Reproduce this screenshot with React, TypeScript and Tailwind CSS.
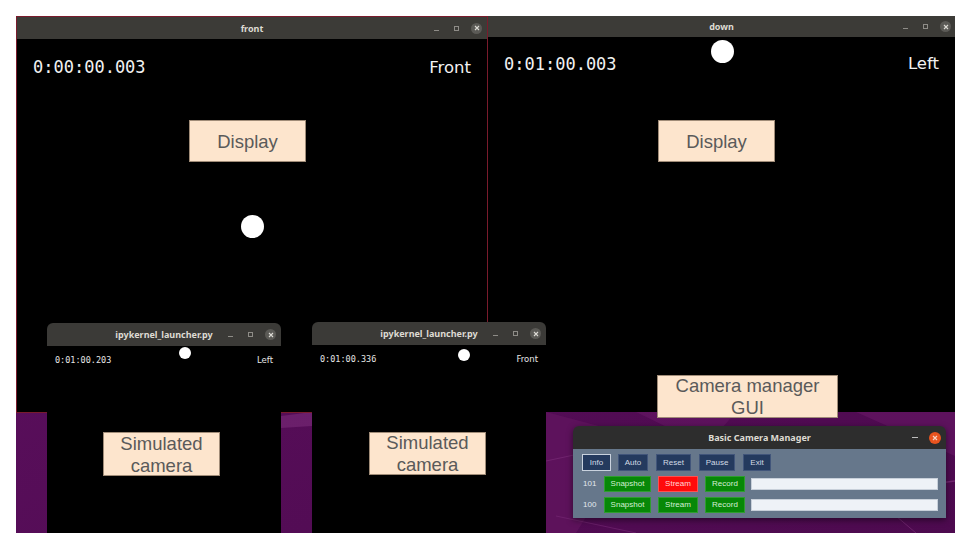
import React from "react";

function Controls({ pr, orange = false }: { pr: string; orange?: boolean }) {
  return (
    <div className={`flex items-center justify-end gap-[9px] ${pr}`}>
      {!orange && (
        <>
          <div className="w-[11px] h-[11px] flex items-end justify-center pb-[3px]">
            <div className="w-[5px] h-px bg-[#8e8c87]" />
          </div>
          <div className="w-[11px] h-[11px] flex items-center justify-center">
            <div className="w-[5px] h-[5px] border border-[#8e8c87]" />
          </div>
          <div className="w-[11px] h-[11px] rounded-full bg-[#5b5a56] flex items-center justify-center">
            <svg width="6" height="6" viewBox="0 0 6 6">
              <path d="M1 1L5 5M5 1L1 5" stroke="#dcdad4" strokeWidth="1.1" />
            </svg>
          </div>
        </>
      )}
      {orange && (
        <>
          <div className="w-[11px] h-[12px] flex items-center justify-center">
            <div className="w-[6px] h-px bg-[#bdbdbd]" />
          </div>
          <div className="w-[12px] h-[12px] rounded-full bg-[#e9541f] flex items-center justify-center">
            <svg width="6" height="6" viewBox="0 0 6 6">
              <path d="M1 1L5 5M5 1L1 5" stroke="#f6d2c4" strokeWidth="1.2" />
            </svg>
          </div>
        </>
      )}
    </div>
  );
}

function TitleBar({
  title,
  h,
  bg,
  pr,
  orange = false,
}: {
  title: string;
  h: string;
  bg: string;
  pr: string;
  orange?: boolean;
}) {
  return (
    <div className={`grid grid-cols-[1fr_auto_1fr] items-center shrink-0 ${h} ${bg}`}>
      <div />
      <div className="font-['Noto_Sans',sans-serif] font-bold text-[9px] leading-none text-[#dedbd3]">
        {title}
      </div>
      <Controls pr={pr} orange={orange} />
    </div>
  );
}

function Label({ className, children }: { className: string; children: React.ReactNode }) {
  return (
    <div
      className={`absolute bg-[#fde5cd] border border-[#a08c78] pt-[1px] flex flex-col items-center justify-center text-center text-[#5a5a5a] text-[18.5px] leading-[22px] font-['Liberation_Sans',Arial,sans-serif] ${className}`}
    >
      {children}
    </div>
  );
}

function Dot({ className }: { className: string }) {
  return <div className={`absolute rounded-full bg-white ${className}`} />;
}

const navyBtn =
  "h-[17px] bg-[#243a5e] border border-[#41557a] text-[#d3dae5] text-[8px] leading-none flex items-center justify-center font-['Liberation_Sans',Arial,sans-serif]";
const greenBtn =
  "h-[16px] bg-[#078807] border border-[#2f9e2f] text-[#d5eed5] text-[8px] leading-none flex items-center justify-center font-['Liberation_Sans',Arial,sans-serif]";
const redBtn =
  "h-[16px] bg-[#ff0b0b] border border-[#ff5050] text-[#ffd6d6] text-[8px] leading-none flex items-center justify-center font-['Liberation_Sans',Arial,sans-serif]";

function CamRow({ id, streamRed }: { id: string; streamRed: boolean }) {
  return (
    <div className="flex items-center h-[16px]">
      <div className="w-[21px] text-[#e3e8ef] text-[8px] leading-none font-['Liberation_Sans',Arial,sans-serif]">
        {id}
      </div>
      <div className={`${greenBtn} w-[47px]`}>Snapshot</div>
      <div className={`${streamRed ? redBtn : greenBtn} w-[40px] ml-[7px]`}>Stream</div>
      <div className={`${greenBtn} w-[40px] ml-[7px]`}>Record</div>
      <div className="w-[187px] h-[12px] ml-[6px] bg-[#eef2f7] border border-[#c8d0da]" />
    </div>
  );
}

export default function App() {
  return (
    <div className="w-[960px] h-[540px] bg-white p-4">
      <div className="relative w-[939px] h-[517px] overflow-hidden bg-[#570d58]">
        {/* wallpaper */}
        <svg className="absolute inset-0" width="939" height="517" viewBox="0 0 939 517">
          <defs>
            <linearGradient id="wp" x1="0" y1="0" x2="1" y2="1">
              <stop offset="0" stopColor="#5e1060" />
              <stop offset="1" stopColor="#4d0a4f" />
            </linearGradient>
          </defs>
          <rect width="939" height="517" fill="url(#wp)" />
          <polygon points="265,400 296,396 296,410 265,412" fill="#7a2c78" opacity="0.6" />
          <polygon points="530,396 620,420 560,517 530,517" fill="#63155f" opacity="0.7" />
          <polygon points="620,396 720,396 690,430" fill="#6a1a68" opacity="0.5" />
          <polygon points="840,396 939,440 939,396" fill="#671866" opacity="0.6" />
          <line x1="530" y1="445" x2="600" y2="430" stroke="#7e2f7c" strokeWidth="1" opacity="0.6" />
          <line x1="900" y1="470" x2="939" y2="465" stroke="#8a3a86" strokeWidth="1.5" opacity="0.6" />
          <line x1="880" y1="500" x2="900" y2="517" stroke="#8a3a86" strokeWidth="1" opacity="0.5" />
          <line x1="540" y1="500" x2="620" y2="517" stroke="#7e2f7c" strokeWidth="1" opacity="0.5" />
        </svg>

        {/* front window */}
        <div className="absolute left-0 top-0 w-[472px] h-[397px] border border-[#7a1b2c] bg-black flex flex-col">
          <TitleBar title="front" h="h-[22px]" bg="bg-[#3c3b37]" pr="pr-[5px]" />
          <div className="relative flex-1">
            <div className="flex items-center justify-between h-[57px] pl-[16px] pr-[16px]">
              <span className="font-['DejaVu_Sans_Mono',monospace] text-[17px] leading-none text-[#f2f2f2]">
                0:00:00.003
              </span>
              <span className="font-['DejaVu_Sans',sans-serif] text-[16.5px] leading-none text-[#f2f2f2] pt-[1px]">
                Front
              </span>
            </div>
            <Dot className="left-[224px] top-[176px] w-[23px] h-[23px]" />
          </div>
        </div>

        {/* down window */}
        <div className="absolute left-[472px] top-0 w-[467px] h-[396px] bg-black flex flex-col">
          <TitleBar title="down" h="h-[21px]" bg="bg-[#3c3b37]" pr="pr-[4px]" />
          <div className="relative flex-1">
            <div className="flex items-center justify-between h-[55px] pl-[16px] pr-[16px]">
              <span className="font-['DejaVu_Sans_Mono',monospace] text-[17px] leading-none text-[#f2f2f2]">
                0:01:00.003
              </span>
              <span className="font-['DejaVu_Sans',sans-serif] text-[16.5px] leading-none text-[#f2f2f2]">
                Left
              </span>
            </div>
            <Dot className="left-[223px] top-[3px] w-[23px] h-[23px]" />
          </div>
        </div>

        {/* small window 1 */}
        <div className="absolute left-[31px] top-[307px] w-[234px] h-[210px] rounded-t-[6px] overflow-hidden bg-black flex flex-col">
          <TitleBar title="ipykernel_launcher.py" h="h-[23px]" bg="bg-[#3b3a37]" pr="pr-[5px]" />
          <div className="relative flex-1">
            <div className="flex items-center justify-between h-[29px] pl-[8px] pr-[8px]">
              <span className="font-['DejaVu_Sans_Mono',monospace] text-[8.5px] leading-none text-[#e6e6e6]">
                0:01:00.203
              </span>
              <span className="font-['DejaVu_Sans',sans-serif] text-[8.5px] leading-none text-[#e6e6e6]">
                Left
              </span>
            </div>
            <Dot className="left-[132px] top-[1px] w-[12px] h-[12px]" />
          </div>
        </div>

        {/* small window 2 */}
        <div className="absolute left-[296px] top-[306px] w-[234px] h-[211px] rounded-t-[6px] overflow-hidden bg-black flex flex-col">
          <TitleBar title="ipykernel_launcher.py" h="h-[23px]" bg="bg-[#3b3a37]" pr="pr-[5px]" />
          <div className="relative flex-1">
            <div className="flex items-center justify-between h-[28px] pl-[8px] pr-[8px]">
              <span className="font-['DejaVu_Sans_Mono',monospace] text-[8.5px] leading-none text-[#e6e6e6]">
                0:01:00.336
              </span>
              <span className="font-['DejaVu_Sans',sans-serif] text-[8.5px] leading-none text-[#e6e6e6]">
                Front
              </span>
            </div>
            <Dot className="left-[146px] top-[4px] w-[12px] h-[12px]" />
          </div>
        </div>

        {/* camera manager */}
        <div className="absolute left-[557px] top-[410px] w-[373px] h-[92px] rounded-t-[6px] overflow-hidden flex flex-col shadow-[0_2px_6px_rgba(0,0,0,0.5)]">
          <TitleBar title="Basic Camera Manager" h="h-[23px]" bg="bg-[#2d2d2d]" pr="pr-[5px]" orange />
          <div className="flex-1 bg-[#66778b] pl-[9px] pt-[5px] flex flex-col gap-[5px]">
            <div className="flex items-center gap-[7px]">
              <div className={`${navyBtn} w-[29px] border-[#c9d2de]`}>Info</div>
              <div className={`${navyBtn} w-[30px]`}>Auto</div>
              <div className={`${navyBtn} w-[35px] ml-[1px]`}>Reset</div>
              <div className={`${navyBtn} w-[36px] ml-[1px]`}>Pause</div>
              <div className={`${navyBtn} w-[28px] ml-[1px]`}>Exit</div>
            </div>
            <div className="pl-[1px] flex flex-col gap-[5px]">
              <CamRow id="101" streamRed />
              <CamRow id="100" streamRed={false} />
            </div>
          </div>
        </div>

        {/* annotations */}
        <Label className="left-[173px] top-[104px] w-[117px] h-[42px]">Display</Label>
        <Label className="left-[642px] top-[104px] w-[117px] h-[42px]">Display</Label>
        <Label className="left-[87px] top-[416px] w-[117px] h-[44px]">
          <span>Simulated</span>
          <span>camera</span>
        </Label>
        <Label className="left-[353px] top-[416px] w-[117px] h-[43px]">
          <span>Simulated</span>
          <span>camera</span>
        </Label>
        <Label className="left-[641px] top-[359px] w-[181px] h-[43px]">
          <span>Camera manager</span>
          <span>GUI</span>
        </Label>
      </div>
    </div>
  );
}
